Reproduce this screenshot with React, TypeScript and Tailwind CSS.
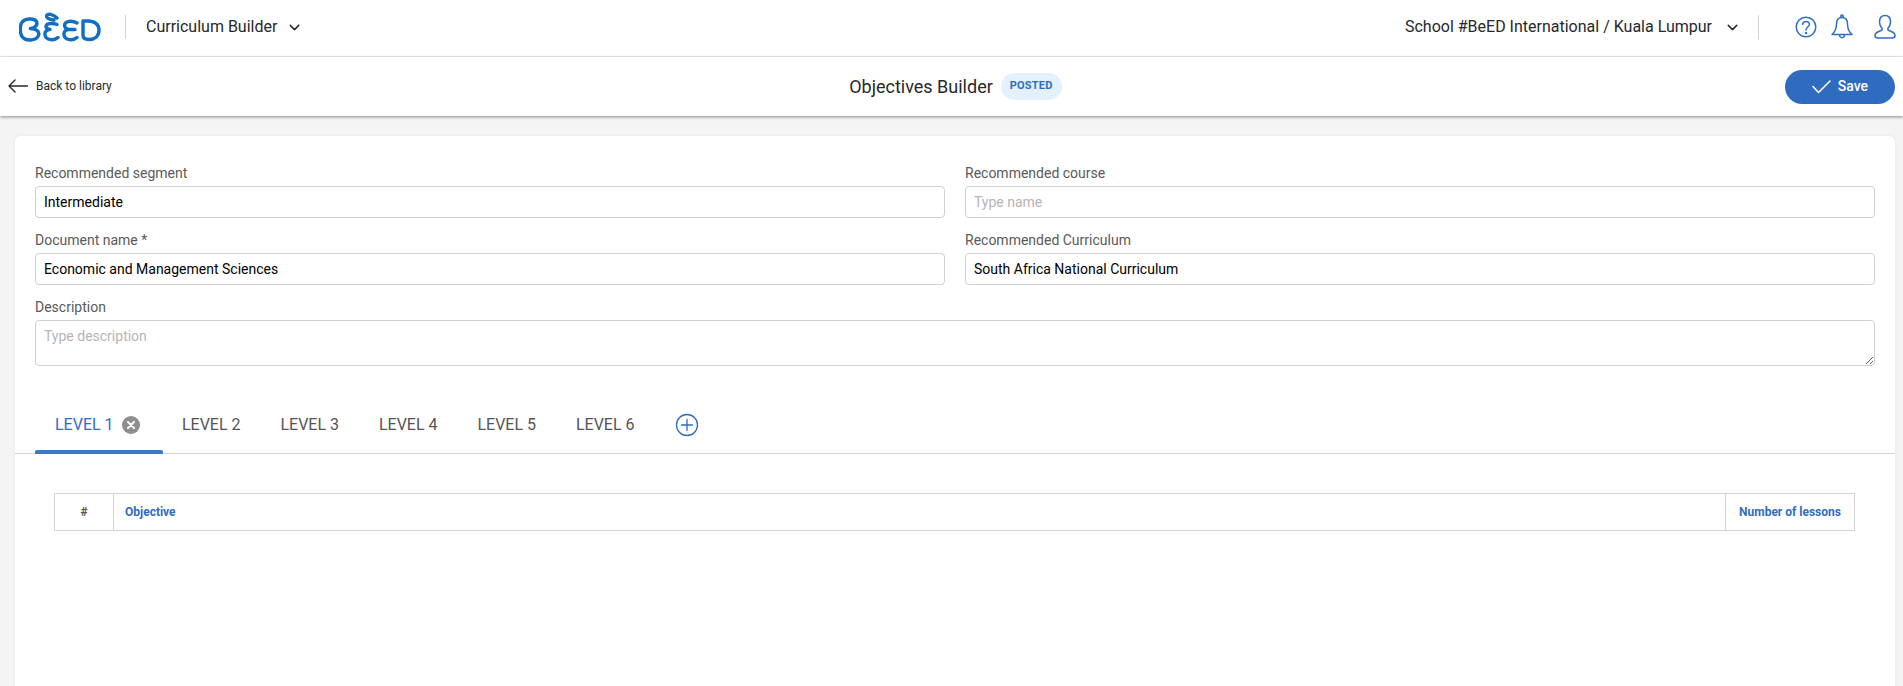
import { ChevronDown } from "lucide-react";

const font = { fontFamily: "Roboto, sans-serif" };

function Logo() {
  return (
    <svg width="82" height="30" viewBox="0 0 82 30" fill="none" stroke="#0f6fc6" strokeWidth="3.4" strokeLinecap="round" strokeLinejoin="round">
      <path d="M2.5 11 C5 6.5 15 5.5 17.5 9.5 C19 13 16 16 11.5 16.5 C17 16.5 21 19.5 19.5 23.5 C17.5 29 6.5 29.5 3 24.5 C0.5 20.5 1 14 2.5 11" />
      <path d="M38 6 C34 2 28 1 27.5 4 C27.5 6.5 31 7.5 35 8 M38 12.5 C33 10.5 27 11.5 27 14.5 C27 16 28.5 17 31 17.5 C27.5 17.5 25.5 20 26 23 C27 28.5 35 29 39 25.5" />
      <path d="M58 11 C53 8 46 9 45.5 13 C45.5 15.5 47 17 50 17.5 C46.5 17.5 44.5 20 45 23 C46 28.5 54 29 58 25.5 M50 17.5 H56" />
      <path d="M64 9 H69 C75.5 9 80 12.5 80 18 C80 24.5 75.5 27.5 70 27.5 C66 27.5 64 26 64 23 V9" />
    </svg>
  );
}

function Field({ label, value, placeholder }: { label: string; value?: string; placeholder?: string }) {
  return (
    <div>
      <label className="block text-[14px] leading-[18px] text-[#5a5a5a] mb-[4px]">{label}</label>
      <input
        readOnly
        value={value}
        placeholder={placeholder}
        className="w-full h-[32px] border border-[#d0d0d0] rounded-[4px] px-[8px] text-[14px] text-black placeholder:text-[#b5b5b5] outline-none"
      />
    </div>
  );
}

export default function App() {
  const levels = ["LEVEL 2", "LEVEL 3", "LEVEL 4", "LEVEL 5", "LEVEL 6"];
  return (
    <div className="h-[686px] overflow-hidden bg-[#f4f4f4]" style={font}>
      {/* top bar */}
      <header className="h-[57px] bg-white border-b border-[#f0f0f0] flex items-center pl-[19px] pr-[7px] pb-[2px]">
        <Logo />
        <div className="w-px h-[24px] bg-[#d5d5d5] ml-[24px] mr-[20px]" />
        <span className="text-[16px] text-[#26282c]">Curriculum Builder</span>
        <ChevronDown className="ml-[9px] text-[#26282c]" size={17} strokeWidth={2} />
        <div className="flex-1" />
        <span className="text-[16px] text-[#26282c]">School #BeED International / Kuala Lumpur</span>
        <ChevronDown className="ml-[12px] text-[#26282c]" size={17} strokeWidth={2} />
        <div className="w-px h-[24px] bg-[#d5d5d5] ml-[17px] mr-[36px]" />
        <svg width="22" height="24" viewBox="0 0 22 24" fill="none" stroke="#2f6fc4" strokeWidth="1.5" strokeLinecap="round">
          <circle cx="11" cy="12" r="9.8" />
          <path d="M7.6 9.4 C7.8 5.4 14.4 5.4 14.4 9.4 C14.4 12 11 12 11 15" />
          <circle cx="11" cy="18" r="0.5" fill="#2f6fc4" />
        </svg>
        <svg className="ml-[13px]" width="24" height="26" viewBox="0 0 24 26" fill="none" stroke="#2f6fc4" strokeWidth="1.5" strokeLinecap="round" strokeLinejoin="round">
          <path d="M12 3.5 C7.5 3.5 6.5 7 6.5 10 C6.5 15 5 18 2 20.5 H22 C19 18 17.5 15 17.5 10 C17.5 7 16.5 3.5 12 3.5 Z" />
          <circle cx="12" cy="2.2" r="1.2" />
          <path d="M9.5 21 C10 24.5 14 24.5 14.5 21" />
        </svg>
        <svg className="ml-[20px]" width="22" height="26" viewBox="0 0 22 26" fill="none" stroke="#2f6fc4" strokeWidth="1.5" strokeLinecap="round" strokeLinejoin="round">
          <path d="M11 1.5 C7 1.5 5.5 4.5 5.5 8 C5.5 11 7 13 8 14 V16 C5 17.5 1 18 1 21.5 C1 23.5 2.5 24 4 24 H18 C19.5 24 21 23.5 21 21.5 C21 18 17 17.5 14 16 V14 C15 13 16.5 11 16.5 8 C16.5 4.5 15 1.5 11 1.5 Z" />
        </svg>
      </header>

      {/* sub bar */}
      <div className="relative h-[59px] bg-white shadow-[0_1px_3px_rgba(0,0,0,0.45)] flex items-center justify-between pl-[8px] pr-[8px]">
        <div className="flex items-center pb-[2px]">
          <svg width="20" height="14" viewBox="0 0 20 14" fill="none" stroke="#26282c" strokeWidth="1.4" strokeLinecap="round" strokeLinejoin="round">
            <path d="M19.5 7 H1 M7 1 L1 7 L7 13" />
          </svg>
          <span className="ml-[8px] text-[12px] text-[#26282c]">Back to library</span>
        </div>
        <div className="flex items-center ml-[14px]">
          <span className="text-[18px] text-[#26282c]">Objectives Builder</span>
          <span className="ml-[8px] h-[27px] px-[9px] rounded-full bg-[#e3f0fd] text-[#2f6cc0] text-[11px] font-bold flex items-center tracking-[0.2px]">POSTED</span>
        </div>
        <button className="w-[110px] h-[34px] rounded-full bg-[#2f6cc0] text-white text-[14px] font-medium flex items-center justify-center gap-[7px]">
          <svg width="19" height="14" viewBox="0 0 19 14" fill="none" stroke="white" strokeWidth="1.5" strokeLinecap="round" strokeLinejoin="round">
            <path d="M1 6.5 L6.5 12.5 L18 1" />
          </svg>
          Save
        </button>
      </div>

      {/* card */}
      <main className="ml-[15px] mr-[8px] mt-[20px] bg-white rounded-t-[6px] h-[560px] shadow-[0_0_4px_rgba(0,0,0,0.06)]">
        <div className="px-[20px] pt-[28px]">
          <div className="grid grid-cols-2 gap-x-[20px] gap-y-[13px]">
            <Field label="Recommended segment" value="Intermediate" />
            <Field label="Recommended course" placeholder="Type name" />
            <Field label="Document name *" value="Economic and Management Sciences" />
            <Field label="Recommended Curriculum" value="South Africa National Curriculum" />
            <div className="col-span-2">
              <label className="block text-[14px] leading-[18px] text-[#5a5a5a] mb-[4px]">Description</label>
              <textarea
                readOnly
                placeholder="Type description"
                className="block w-full h-[46px] border border-[#d0d0d0] rounded-[4px] px-[8px] py-[5px] text-[14px] placeholder:text-[#b5b5b5] outline-none"
              />
            </div>
          </div>
        </div>

        {/* tabs */}
        <div className="mt-[34px] h-[54px] border-b border-[#d5d5d5] flex items-stretch pl-[20px]">
          <div className="relative w-[127px] flex items-center pl-[20px] pb-[3px] text-[16px] text-[#2f6cc0]">
            LEVEL 1
            <span className="ml-[8px] w-[18px] h-[18px] rounded-full bg-[#8f8f8f] flex items-center justify-center">
              <svg width="8" height="8" viewBox="0 0 8 8" stroke="white" strokeWidth="2" strokeLinecap="round"><path d="M1 1 L7 7 M7 1 L1 7" /></svg>
            </span>
            <span className="absolute left-0 -right-px -bottom-px h-[4px] rounded-t-[2px] bg-[#3b7acb]" />
          </div>
          {levels.map((l) => (
            <div key={l} className="w-[98.5px] flex items-center justify-center pb-[3px] text-[16px] text-[#555]">{l}</div>
          ))}
          <div className="flex items-center ml-[20px] pb-[3px]">
            <svg width="24" height="24" viewBox="0 0 24 24" fill="none" stroke="#2f6cc0" strokeWidth="1.3" strokeLinecap="round">
              <circle cx="12" cy="12" r="10.5" />
              <path d="M12 6.5 V17.5 M6.5 12 H17.5" />
            </svg>
          </div>
        </div>

        {/* table */}
        <div className="ml-[39px] mr-[40px] mt-[39px]">
          <table className="w-full border-collapse text-[12px]">
            <thead>
              <tr className="h-[37px]">
                <th className="w-[59px] border border-[#d5d5d5] font-bold text-[#555] text-center">#</th>
                <th className="border border-[#d5d5d5] font-bold text-[#2f6cc0] text-left pl-[11px]">Objective</th>
                <th className="w-[129px] border border-[#d5d5d5] font-bold text-[#2f6cc0] text-center">Number of lessons</th>
              </tr>
            </thead>
          </table>
        </div>
      </main>
    </div>
  );
}
